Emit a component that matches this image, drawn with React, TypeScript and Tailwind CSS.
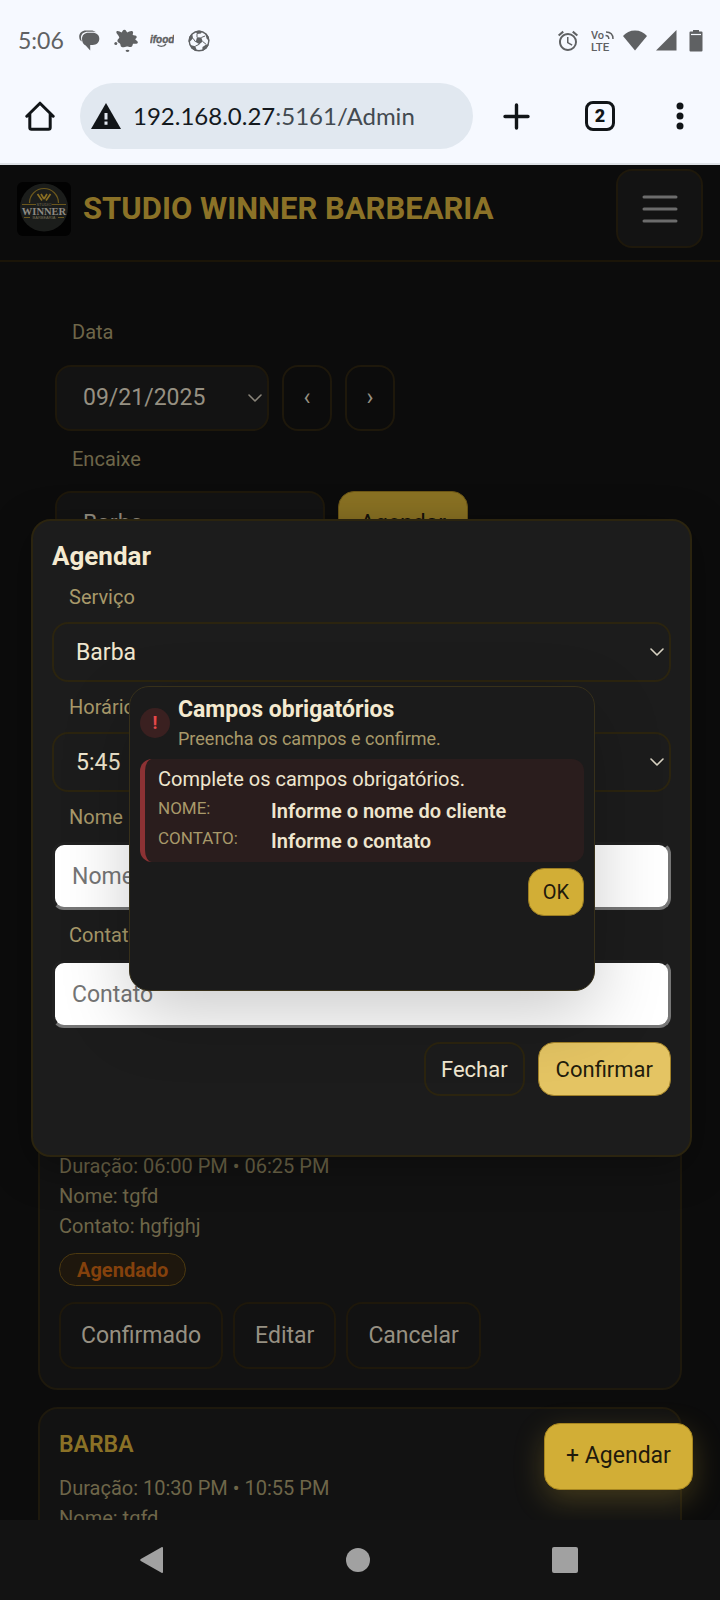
import type { ReactNode } from 'react';
import { MdAlarm } from 'react-icons/md';

function Chevron({ className }: { className: string }) {
  return (
    <svg viewBox="0 0 14 8" className={`pointer-events-none absolute top-1/2 h-2 w-3.5 -translate-y-1/2 fill-none stroke-2 ${className}`} strokeLinecap="round" strokeLinejoin="round">
      <path d="M1 1l6 6 6-6" strokeWidth="1.6" />
    </svg>
  );
}

function SoccerBall() {
  return (
    <svg viewBox="0 0 22 22" className="ml-3.5 h-[22px] w-[22px]">
      <defs>
        <clipPath id="ball">
          <circle cx="11" cy="11" r="10.500" />
        </clipPath>
      </defs>
      <circle cx="11" cy="11" r="9.800" fill="none" stroke="currentColor" strokeWidth="1.400" />
      <g clipPath="url(#ball)" fill="currentColor">
        <path d="M9 7.200l4.300.3 1.400 4-3.300 2.700-3.700-2.200z" />
        <path d="M7 0h7.500L13 3.600l-4 .3z" />
        <path d="M17 3l5 2v6l-3.300-2.200z" />
        <path d="M0 5l4.300-1 .7 4.300L1.600 12H0z" />
        <path d="M3 15.300l4.300.9 1.500 4L7 22l-5-3z" />
        <path d="M14.500 17l3.700-2.600L22 15l-4 6-3.800.5z" />
      </g>
      <path d="M9 7.200V3.900M13.300 7.500l3.800-1.500M14.700 11.500l3.500 2.900M11.400 14.200l-4.100 2M7.700 12L5 8.300" stroke="currentColor" strokeWidth="1" />
    </svg>
  );
}

function StatusBar() {
  return (
    <div className="flex h-[81px] items-center justify-between pr-[17px] pl-[18px] text-[#5f6163]">
      <div className="flex items-center">
        <span className="w-[61px] font-[Lato] text-[23px]">5:06</span>
        <svg viewBox="0 0 21 21" className="h-[21px] w-[21px]" fill="currentColor">
          <path d="M3 11.500C1 10.800.2 9 .2 6.800C.2 3 3 .6 7 .6h5c2 0 3.700.6 4.800 1.600-1-.4-2.300-.5-4-.5H9C4.500 1.700 2 4 2 7.500c0 1.600.3 2.900 1 4z" />
          <path d="M9.500 2.800h4.200c4 0 6.600 2.500 6.600 6s-2.600 6.200-6.600 6.200h-2.500v5.400L6.700 15.500C4.300 14.300 3 12 3 9c0-3.800 2.600-6.200 6.500-6.200z" />
        </svg>
        <svg viewBox="0 0 24 24" className="ml-3.5 h-6 w-6" fill="currentColor">
          <path d="M2.500 2.500C3.500 1.200 6 2.600 7.500 3.600 8.500 2.500 8.700.8 10.500.7c1.500 0 1.700 1.700 2.700 2.700 1.500-.6 3.600-2 5.200-1.200 1.400.8.300 2.600.3 3.900 1.200.6 3.600.1 4 1.600.3 1.200-1.200 1.700-1.400 2.700.9.9 2.800 1.800 2.500 3.300-.4 1.600-3.300.7-4.800 1-.4 1.400-.7 3.200-2.400 3.400-1.500.1-2.500-.8-3.800-.7-1.700.1-3.300 1.500-5 .7-1.600-.8-.9-2.600-1.900-3.700-.9-.9-2.300-1-2.500-2.500-.1-1.500 1.800-1.900 1.900-3.300C5.400 6.500 1.400 4.200 2.500 2.500z" />
          <circle cx="1.800" cy="14.500" r="1.500" />
          <ellipse cx="13.500" cy="21.800" rx="1.900" ry="1.100" />
        </svg>
        <svg viewBox="0 0 24 16" className="ml-3 h-4 w-6" fill="currentColor" stroke="currentColor">
          <text x="0" y="9.500" fontFamily="Liberation Sans" fontSize="10" fontWeight="700" fontStyle="italic" strokeWidth="0.400">ifood</text>
          <path d="M7.500 12c3 2 6.500 1.600 8.500-1" fill="none" strokeWidth="1.300" />
        </svg>
        <SoccerBall />
      </div>
      <div className="flex items-center">
        <MdAlarm className="h-6 w-6" />
        <svg viewBox="0 0 24 22" className="ml-[11px] h-[22px] w-6" fill="currentColor">
          <text x="0" y="9" fontFamily="Roboto" fontSize="11" fontWeight="500">Vo</text>
          <text x="0" y="20.500" fontFamily="Roboto" fontSize="11.500" fontWeight="500">LTE</text>
          <g fill="none" stroke="currentColor" strokeWidth="1.500">
            <path d="M14.500 5.500c2 0 3.300 1.300 3.300 3.500M15 2c4.500 0 7 2.800 7 7" />
          </g>
        </svg>
        <svg viewBox="0 0 24 21" className="ml-2 h-[21px] w-6" fill="currentColor">
          <path d="M12 20.500L0 6C3 2.500 7 .5 12 .5S21 2.500 24 6z" />
        </svg>
        <svg viewBox="0 0 21 21" className="ml-[9px] h-[21px] w-[21px]" fill="currentColor">
          <path d="M20.500 0v20.500H0z" />
        </svg>
        <svg viewBox="0 0 14 22" className="ml-3 h-[22px] w-3.5" fill="currentColor">
          <path d="M4 0h6v1.500h2.500A1 1 0 0113.500 2.500v18a1 1 0 01-1 1h-11a1 1 0 01-1-1v-18a1 1 0 011-1H4z" />
          <path d="M2 4.500h10" stroke="#f6f9ff" strokeWidth="1.200" />
        </svg>
      </div>
    </div>
  );
}

function BrowserBar() {
  return (
    <div className="flex h-[82px] items-center pt-0.5 pr-9 pb-3.5 pl-[25px] text-[#111518]">
      <button aria-label="Home" className="shrink-0">
        <svg viewBox="0 0 30 30" className="h-[30px] w-[30px]" fill="none" stroke="currentColor" strokeWidth="3" strokeLinejoin="round" strokeLinecap="round">
          <path d="M1.800 15.200L15 2.200l13.200 13M4.800 13v13.500c0 1 .7 1.700 1.700 1.700h17c1 0 1.700-.7 1.700-1.700V13" />
        </svg>
      </button>
      <div className="ml-[25px] flex h-[66px] min-w-0 flex-1 items-center rounded-full bg-[#e1e8f0] pl-[11px]">
        <svg viewBox="0 0 30 26" className="h-[26px] w-[30px]">
          <path d="M15 0l15 26H0z" fill="#111518" />
          <path d="M15 10v6.500M15 18.500v3.300" stroke="#e1e8f0" strokeWidth="3" />
        </svg>
        <span className="ml-3 truncate font-[Lato] text-2xl text-[#434a51]">
          <span className="text-[#14191e]">192.168.0.27</span>:5161/Admin
        </span>
      </div>
      <button aria-label="New tab" className="ml-[30px] shrink-0">
        <svg viewBox="0 0 27 27" className="h-[27px] w-[27px]" stroke="currentColor" strokeWidth="3.400" strokeLinecap="round">
          <path d="M13.500 2v23M2 13.500h23" />
        </svg>
      </button>
      <button aria-label="Tabs" className="ml-[55px] flex h-[30px] w-[30px] shrink-0 items-center justify-center rounded-lg border-3 border-current font-[Roboto] text-lg leading-none font-black">
        2
      </button>
      <button aria-label="More" className="ml-[61px] shrink-0">
        <svg viewBox="0 0 8 28" className="h-7 w-2" fill="currentColor">
          <circle cx="4" cy="4" r="3.500" />
          <circle cx="4" cy="14" r="3.500" />
          <circle cx="4" cy="24" r="3.500" />
        </svg>
      </button>
    </div>
  );
}

function Logo() {
  return (
    <svg viewBox="0 0 54 54" className="h-[54px] w-[54px]">
      <rect width="54" height="54" rx="6" fill="#020202" />
      <circle cx="27" cy="25.500" r="24" fill="#1b1d1b" />
      <path d="M12.500 21a14.500 14.500 0 0129 0" fill="none" stroke="#6b571c" strokeWidth="1.200" />
      <path d="M20.500 12l4.500 6.500M24 12l3 5M33.500 12L29 18.500M30 12l-3 5" fill="none" stroke="#8a6f22" strokeWidth="1.700" />
      <path d="M5 22.500h14M35 22.500h14M7 35.500h6M41 35.500h6" stroke="#6b571c" strokeWidth="1" />
      <text x="27" y="23.500" textAnchor="middle" fontFamily="Liberation Sans" fontSize="4" fill="#777057">STUDIO</text>
      <text x="27" y="33" textAnchor="middle" fontFamily="Liberation Serif" fontWeight="700" fontSize="10.500" fill="#8e8b83">WINNER</text>
      <text x="27" y="37" textAnchor="middle" fontFamily="Liberation Sans" fontSize="4" fill="#777057">BARBEARIA</text>
    </svg>
  );
}

function DimButton({ children, className }: { children: ReactNode; className: string }) {
  return (
    <button className={`rounded-2xl border-2 border-[#1e180b] text-[#969082] ${className}`}>{children}</button>
  );
}

function Booking({ start, end, children }: { start: string; end: string; children?: ReactNode }) {
  return (
    <article className="rounded-[20px] border-2 border-[#1e190d] bg-[#121212] px-[19px] pt-[21px] pb-[19px] text-xl leading-[30px] text-[#6e6649]">
      <h3 className="mb-[13px] text-[23px] leading-[30px] font-semibold text-[#8a7126]">BARBA</h3>
      <p>Duração: {start} • {end}</p>
      <p>Nome: tgfd</p>
      {children}
    </article>
  );
}

function AdminPage() {
  return (
    <div>
      <header className="flex items-center border-b-2 border-[#1b1508] px-[17px] pt-1 pb-3">
        <Logo />
        <h1 className="ml-3 flex-1 text-[31px] leading-9 font-bold text-[#8b7227]">STUDIO WINNER BARBEARIA</h1>
        <button aria-label="Menu" className="flex h-[79px] w-[87px] items-center justify-center rounded-2xl border-2 border-[#1e180b] bg-[#131313]">
          <svg viewBox="0 0 36 28" className="h-7 w-9" stroke="#6c6c6c" strokeWidth="3" strokeLinecap="round">
            <path d="M2 2h32M2 14h32M2 26h32" />
          </svg>
        </button>
      </header>
      <main className="pt-[55px]">
        <div className="px-[55px] text-[23px]">
          <label htmlFor="date" className="block pl-[17px] text-xl leading-[30px] text-[#6e6649]">Data</label>
          <div className="mt-[18px] flex gap-[13px]">
            <div className="relative">
              <select id="date" className="h-[66px] w-[214px] appearance-none rounded-2xl border-2 border-[#1e180b] bg-[#131313] pt-px pl-[26px] text-[#969082]">
                <option>09/21/2025</option>
              </select>
              <Chevron className="right-[7px] stroke-[#8a857a]" />
            </div>
            <DimButton className="h-[66px] w-[50px]">‹</DimButton>
            <DimButton className="h-[66px] w-[50px]">›</DimButton>
          </div>
          <label htmlFor="walkin" className="mt-[13px] block pl-[17px] text-xl leading-[30px] text-[#6e6649]">Encaixe</label>
          <div className="mt-[17px] flex gap-[13px]">
            <select id="walkin" className="h-[66px] w-[270px] appearance-none rounded-2xl border-2 border-[#1e180b] bg-[#131313] pt-px pl-[26px] text-[#969082]">
              <option>Barba</option>
            </select>
            <button className="h-[66px] w-[130px] rounded-2xl border border-[#6b5515] bg-[#8a7223] text-[#14110a]">Agendar</button>
          </div>
        </div>
        <section className="mt-[528px] flex flex-col gap-[17px] px-[38px]">
          <Booking start="06:00 PM" end="06:25 PM">
            <p>Contato: hgfjghj</p>
            <span className="mt-3 flex h-[33px] w-fit items-center rounded-full border border-[#4c3910] bg-[#1e170d] px-[17px] font-bold text-[#84410c]">
              Agendado
            </span>
            <div className="mt-4 flex gap-[10px] text-[23px]">
              <DimButton className="h-[67px] px-5">Confirmado</DimButton>
              <DimButton className="h-[67px] px-5">Editar</DimButton>
              <DimButton className="h-[67px] px-5">Cancelar</DimButton>
            </div>
          </Booking>
          <Booking start="10:30 PM" end="10:55 PM" />
        </section>
      </main>
    </div>
  );
}

function SelectField({ id, label, value }: { id: string; label: string; value: string }) {
  return (
    <div>
      <label htmlFor={id} className="block pl-[17px] text-xl leading-[30px]">{label}</label>
      <div className="relative mt-[10px]">
        <select id={id} className="h-[60px] w-full appearance-none rounded-2xl border-2 border-[#2b240f] bg-[#1c1c1c] pt-0.5 pl-[22px] text-[23px] text-[#efe6cf]">
          <option>{value}</option>
        </select>
        <Chevron className="right-[7px] stroke-[#d8d2c2]" />
      </div>
    </div>
  );
}

function TextField({ id, label }: { id: string; label: string }) {
  return (
    <div>
      <label htmlFor={id} className="block pl-[17px] text-xl leading-[30px]">{label}</label>
      <input
        id={id}
        placeholder={label}
        className="mt-[10px] block h-[68px] w-full rounded-xl border-3 border-t-[#202020] border-r-[#767676] border-b-[#767676] border-l-[#202020] bg-white pl-[17px] text-[23px] text-black placeholder:text-[#757575]"
      />
    </div>
  );
}

function BookingDialog() {
  return (
    <div role="dialog" aria-label="Agendar" className="w-full rounded-[20px] border-2 border-[#2b240f] bg-[#1c1c1c] px-[19px] pt-[17px] pb-[59px] text-[#a8996a] shadow-[0_10px_40px_rgba(0,0,0,0.35)]">
      <h2 className="mb-2 text-[26px] leading-9 font-bold text-[#f4ead0]">Agendar</h2>
      <form className="flex flex-col gap-[10px]">
        <SelectField id="service" label="Serviço" value="Barba" />
        <SelectField id="time" label="Horário" value="5:45" />
        <TextField id="name" label="Nome" />
        <TextField id="contact" label="Contato" />
        <div className="mt-1 flex justify-end gap-[13px] text-[22px]">
          <button type="button" className="h-[54px] rounded-2xl border-2 border-[#2b240f] px-[15px] text-[#efe6cf]">Fechar</button>
          <button type="button" className="h-[54px] rounded-2xl border border-[#a08028] bg-[#e4c463] px-[17px] text-[#221c0c]">Confirmar</button>
        </div>
      </form>
    </div>
  );
}

function Alert() {
  return (
    <div role="alertdialog" aria-label="Campos obrigatórios" className="w-[466px] rounded-[20px] border border-[#37301a] bg-[#1b1b1b] px-[10px] pt-2 pb-[74px] shadow-[0_24px_70px_rgba(0,0,0,0.2)]">
      <div className="flex items-center">
        <span className="flex h-[30px] w-[30px] items-center justify-center rounded-full bg-[#3a2020] text-lg font-bold text-[#e8484a]">!</span>
        <div className="ml-2">
          <h2 className="text-[23px] leading-[30px] font-bold text-[#f4ead0]">Campos obrigatórios</h2>
          <p className="text-lg leading-[27px] text-[#a8996a]">Preencha os campos e confirme.</p>
        </div>
      </div>
      <div className="mt-[7px] rounded-xl border-l-5 border-[#8c3234] bg-[#2a1d1d] pt-[5px] pb-1.5 pl-[13px] text-xl leading-[30px] text-[#efe6cf]">
        <p>Complete os campos obrigatórios.</p>
        <dl className="mt-0.5 grid grid-cols-[113px_1fr]">
          <dt className="text-[17px] leading-[25px] text-[#a8996a]">NOME:</dt>
          <dd className="font-semibold">Informe o nome do cliente</dd>
          <dt className="text-[17px] leading-[25px] text-[#a8996a]">CONTATO:</dt>
          <dd className="font-semibold">Informe o contato</dd>
        </dl>
      </div>
      <div className="mt-1.5 flex justify-end">
        <button className="h-12 w-14 rounded-2xl border border-[#9b7d22] bg-[#d2ae36] text-xl text-[#1f1a0c]">OK</button>
      </div>
    </div>
  );
}

export default function App() {
  return (
    <div className="flex h-screen flex-col overflow-hidden bg-[#0c0c0c] font-[Roboto,sans-serif]">
      <div className="shrink-0 border-b-2 border-[#dee2e7] bg-[#f6f9ff]">
        <StatusBar />
        <BrowserBar />
      </div>
      <div className="relative min-h-0 flex-1 overflow-hidden">
        <AdminPage />
        <button className="absolute right-[27px] bottom-[30px] h-[67px] w-[149px] rounded-2xl border border-[#a6851f] bg-[#d2ae36] text-[23px] text-[#1f1a0c] shadow-[0_10px_30px_rgba(210,174,54,0.25)]">
          + Agendar
        </button>
        <div className="absolute inset-0 flex items-center pr-7 pb-[9px] pl-[31px]">
          <BookingDialog />
        </div>
        <div className="absolute inset-0 flex items-center justify-center pb-[9px] pl-1">
          <Alert />
        </div>
      </div>
      <nav className="flex h-20 shrink-0 items-center justify-between bg-[#131313] pr-[142px] pl-[139px]">
        <button aria-label="Back">
          <svg viewBox="0 0 25 28" className="h-7 w-[25px]" fill="#a1a1a1">
            <path d="M22.500 1.200c.8-.5 1.500-.1 1.500.8v24c0 .9-.7 1.300-1.500.8L1.800 15c-.8-.5-.8-1.500 0-2z" />
          </svg>
        </button>
        <button aria-label="Home screen" className="h-6 w-6 rounded-full bg-[#a1a1a1]" />
        <button aria-label="Recents" className="h-[26px] w-[26px] rounded-xs bg-[#a1a1a1]" />
      </nav>
    </div>
  );
}
